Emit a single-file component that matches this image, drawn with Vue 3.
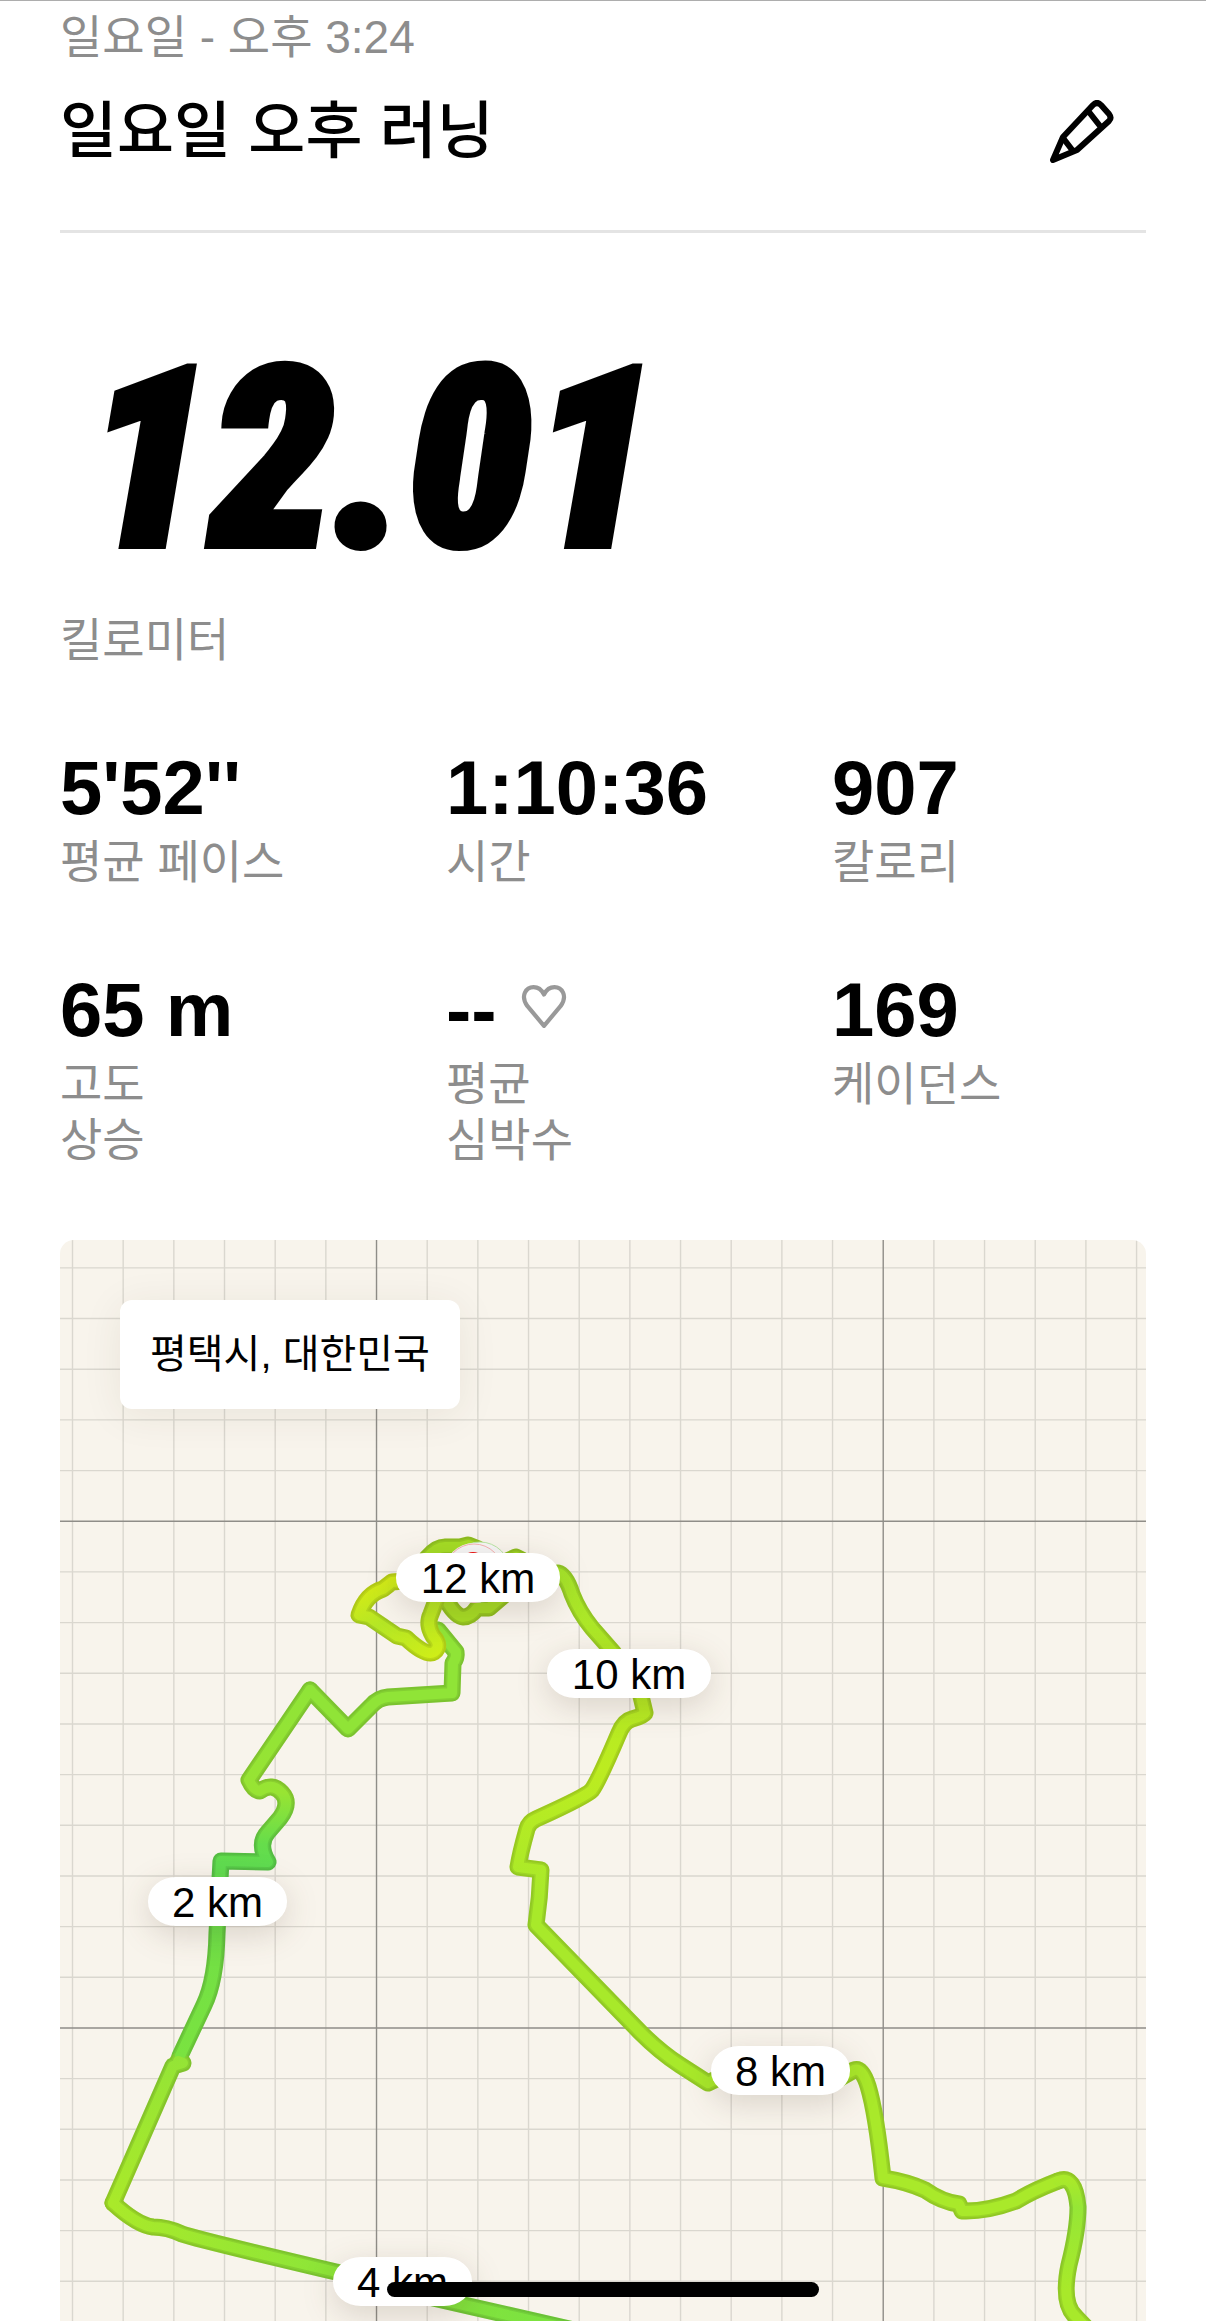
<template>
  <main class="run-page">
    <!-- 헤더 -->
    <header class="run-header">
      <p class="run-date">{{ run.date }}</p>
      <div class="title-row">
        <h1 class="run-title">{{ run.title }}</h1>
        <button type="button" class="edit-button" aria-label="러닝 이름 수정">
          <svg class="edit-icon" viewBox="0 0 64 64">
            <path d="M3 60 L13 37 L43 5 Q47 1 51 5 L59 14 Q62 18 59 21 L27 50 Z" />
            <path d="M39 12 L50 26 M13 38 L23 51" />
          </svg>
        </button>
      </div>
    </header>

    <!-- 거리 -->
    <section class="distance">
      <p class="distance-value">{{ run.distance }}</p>
      <p class="label">킬로미터</p>
    </section>

    <!-- 상세 기록 -->
    <section class="stats">
      <div v-for="stat in stats" :key="stat.label" class="stat">
        <p class="stat-value">
          {{ stat.value }}
          <svg v-if="stat.heart" class="heart-icon" viewBox="0 0 44 44">
            <path d="M22 40 L6 21 C-1 11 5 3 12 3 C17 3 20 6 22 10 C24 6 27 3 32 3 C39 3 45 11 38 21 Z" />
          </svg>
        </p>
        <p class="label">{{ stat.label }}</p>
      </div>
    </section>

    <!-- 지도 -->
    <section class="map">
      <svg class="map-canvas" viewBox="60 1240 1086 1081" preserveAspectRatio="xMidYMin slice">
        <defs>
          <linearGradient id="fade-north" gradientUnits="userSpaceOnUse" x1="0" y1="1690" x2="0" y2="2056">
            <stop offset="0" stop-color="#90e437" />
            <stop offset="0.28" stop-color="#98e433" />
            <stop offset="0.42" stop-color="#66dd4b" />
            <stop offset="0.48" stop-color="#5fdc50" />
            <stop offset="0.75" stop-color="#74e044" />
            <stop offset="1" stop-color="#7ae340" />
          </linearGradient>
          <linearGradient id="fade-west" gradientUnits="userSpaceOnUse" x1="0" y1="2056" x2="0" y2="2203">
            <stop offset="0" stop-color="#94e436" />
            <stop offset="1" stop-color="#a9e92a" />
          </linearGradient>
          <linearGradient id="fade-south" gradientUnits="userSpaceOnUse" x1="113" y1="0" x2="540" y2="0">
            <stop offset="0" stop-color="#a9e92a" />
            <stop offset="0.5" stop-color="#8de538" />
            <stop offset="1" stop-color="#7ce240" />
          </linearGradient>
          <linearGradient id="fade-east" gradientUnits="userSpaceOnUse" x1="0" y1="1570" x2="0" y2="1900">
            <stop offset="0" stop-color="#a6e52a" />
            <stop offset="0.6" stop-color="#bcec20" />
            <stop offset="1" stop-color="#a8e92a" />
          </linearGradient>
          <linearGradient id="fade-loop" gradientUnits="userSpaceOnUse" x1="400" y1="1575" x2="440" y2="1655">
            <stop offset="0" stop-color="#d0ea18" />
            <stop offset="0.4" stop-color="#b4e625" />
            <stop offset="1" stop-color="#cfee18" />
          </linearGradient>
          <linearGradient id="fade-end" gradientUnits="userSpaceOnUse" x1="0" y1="2180" x2="0" y2="2290">
            <stop offset="0" stop-color="#a9e92a" />
            <stop offset="0.25" stop-color="#96e636" />
            <stop offset="1" stop-color="#a8e92a" />
          </linearGradient>
        </defs>

        <g class="grid-minor">
          <line v-for="x in minorX" :key="'x' + x" :x1="x" y1="1240" :x2="x" y2="2321" />
          <line v-for="y in minorY" :key="'y' + y" x1="60" :y1="y" x2="1146" :y2="y" />
        </g>
        <g class="grid-major">
          <line v-for="x in majorX" :key="'x' + x" :x1="x" y1="1240" :x2="x" y2="2321" />
          <line v-for="y in majorY" :key="'y' + y" x1="60" :y1="y" x2="1146" :y2="y" />
        </g>

        <!-- 러닝 경로 -->
        <g v-for="(parts, index) in route" :key="index" class="route">
          <g v-for="layer in layers" :key="layer" :class="layer">
            <path v-for="part in parts" :key="part.d" :d="part.d" :stroke="part.color" />
          </g>
        </g>

        <!-- 출발 / 도착 지점 -->
        <circle cx="480" cy="1572" r="30" fill="#f6f6f6" stroke="#b9e6a4" />
        <circle cx="474" cy="1573" r="30" fill="#f6f6f6" />
        <circle cx="474" cy="1573" r="29" fill="none" stroke="#f5b1b1" />
        <circle cx="473" cy="1565" r="13" fill="#ee1111" />

        <g v-for="marker in markers" :key="marker.text" class="marker">
          <rect :x="marker.x" :y="marker.y" :width="marker.width" height="49" rx="28" ry="24" />
          <text :x="marker.x + marker.width / 2" :y="marker.y + 40">{{ marker.text }}</text>
        </g>
      </svg>
      <p class="location">{{ run.location }}</p>
    </section>

    <div class="home-indicator"></div>
  </main>
</template>

<script setup>
import { ref } from "vue";

const run = ref({
  date: "일요일 - 오후 3:24",
  title: "일요일 오후 러닝",
  distance: "12.01",
  location: "평택시, 대한민국",
});

const stats = ref([
  { value: "5'52''", label: "평균 페이스" },
  { value: "1:10:36", label: "시간" },
  { value: "907", label: "칼로리" },
  { value: "65 m", label: "고도\n상승" },
  { value: "--", label: "평균\n심박수", heart: true },
  { value: "169", label: "케이던스" },
]);

// 10칸마다 굵은 선
const GRID = 50.67;
const gridLines = (start, count, major) => {
  const lines = Array.from({ length: count }, (_, i) => ({
    at: start + i * GRID,
    isMajor: i % 10 === major,
  }));
  return [
    lines.filter((line) => !line.isMajor).map((line) => line.at),
    lines.filter((line) => line.isMajor).map((line) => line.at),
  ];
};

const [minorX, majorX] = gridLines(72.5, 22, 6);
const [minorY, majorY] = gridLines(1267.9, 21, 5);

// 선 하나를 여러 겹으로 그려서 테두리를 표현
const layers = ["route-base", "route-edge", "route-soft", "route-core"];

const route = [
  [
    {
      color: "#a4dc25",
      d: "M427 1558 Q436 1547 445 1547 L460 1547 L468 1545 L478 1549 M505 1562 L516 1557 L522 1560",
    },
    {
      color: "#a6dc25",
      d: "M446 1600 Q456 1617 463 1617 Q471 1617 477 1608 L489 1608 L510 1590",
    },
  ],
  [
    {
      color: "#90e437",
      d: "M438 1630 L456 1652 Q457 1658 453 1663 L452 1693 L388 1697 Q378 1698 371 1706 L348 1729 L310 1690",
    },
    {
      color: "url(#fade-north)",
      d: "M310 1690 L249 1780 Q254 1791 260 1791 Q272 1782 282 1793 Q291 1803 280 1818 L268 1832 Q257 1844 268 1862 L221 1861 L217 1933 Q216 1980 204 2005 L180 2056",
    },
    {
      color: "url(#fade-west)",
      d: "M178 2061 L183 2063 L173 2066 L113 2203",
    },
    {
      color: "url(#fade-south)",
      d: "M113 2203 Q137 2225 153 2227 Q167 2227 182 2234 Q196 2239 336 2272 L420 2295 L600 2336",
    },
  ],
  [
    {
      color: "url(#fade-loop)",
      d: "M404 1581 L392 1582 L383 1589 Q366 1594 359 1615 L369 1617 L397 1636 L406 1638 Q426 1657 434 1652 Q442 1646 433 1636 Q426 1624 431 1614 L437 1598",
    },
  ],
  [
    {
      color: "url(#fade-east)",
      d: "M558 1573 Q566 1575 572 1594 Q579 1612 592 1628 L613 1652 L640 1692 L645 1713 Q643 1716 632 1719 Q624 1721 619 1733 Q599 1780 592 1790 Q587 1796 536 1819 Q529 1822 527 1829 Q520 1854 518 1867 L541 1870 Q540 1898 536 1925 L640 2032 Q660 2052 680 2065 L708 2083 L735 2070",
    },
    {
      color: "#a9e92a",
      d: "M840 2078 L854 2070 Q862 2067 868 2086 Q876 2112 883 2178 Q908 2182 925 2190 Q942 2202 959 2204 L962 2211 Q986 2212 1016 2201 Q1032 2191 1058 2181",
    },
    {
      color: "url(#fade-end)",
      d: "M1058 2181 Q1075 2174 1078 2207 Q1078 2230 1069 2265 Q1061 2304 1076 2317 L1094 2336",
    },
  ],
];

const markers = [
  { text: "12 km", x: 396, y: 1553, width: 164 },
  { text: "10 km", x: 547, y: 1649, width: 164 },
  { text: "2 km", x: 148, y: 1877, width: 139 },
  { text: "8 km", x: 711, y: 2046, width: 139 },
  { text: "4 km", x: 333, y: 2257, width: 139 },
];
</script>

<style>
body {
  margin: 0;
  background: #fff;
}
</style>

<style scoped>
.run-page {
  min-height: 100vh;
  box-sizing: border-box;
  display: flex;
  flex-direction: column;
  padding: 8px 60px 0;
  border-top: 1px solid #adadad;
  font-family: "Liberation Sans", "Noto Sans CJK KR", sans-serif;
  color: #000;
}

p,
h1 {
  margin: 0;
}

/* 헤더 */
.run-header {
  padding-bottom: 48px;
  border-bottom: 3px solid #e4e4e4;
}

.run-date,
.label {
  font-size: 46px;
  line-height: 56px;
  color: #8d8d8d;
  white-space: pre-line;
}

.title-row {
  display: flex;
  align-items: center;
  justify-content: space-between;
  height: 100px;
  margin-top: 17px;
}

.run-title {
  font-size: 62px;
  line-height: 80px;
  font-weight: 500;
}

.edit-button {
  padding: 0 32px;
  border: none;
  background: none;
  cursor: pointer;
}

.edit-icon {
  display: block;
  width: 64px;
  height: 64px;
  fill: none;
  stroke: #000;
  stroke-width: 6;
  stroke-linejoin: round;
}

/* 거리 */
.distance-value {
  margin: 127px 0 52px;
  padding-left: 26px;
  font-family: "Roboto Condensed", Roboto, sans-serif;
  font-size: 250px;
  line-height: 200px;
  font-weight: 900;
  font-style: italic;
  -webkit-text-stroke: 8px #000;
}

/* 상세 기록 */
.stats {
  display: grid;
  grid-template-columns: repeat(3, 1fr);
  gap: 80px 72px;
  margin: 80px 0 72px;
}

.stat-value {
  display: flex;
  align-items: center;
  gap: 24px;
  margin-bottom: 6px;
  font-size: 76px;
  line-height: 80px;
  font-weight: 700;
  white-space: nowrap;
}

.heart-icon {
  width: 46px;
  height: 46px;
  margin-bottom: 6px;
  fill: none;
  stroke: #999;
  stroke-width: 4;
  stroke-linejoin: round;
}

/* 지도 */
.map {
  position: relative;
  flex: 1;
  min-height: 600px;
  display: flex;
  align-items: flex-start;
  border-radius: 14px 14px 0 0;
  overflow: hidden;
  background: #f8f4ec;
}

.map-canvas {
  position: absolute;
  inset: 0;
  width: 100%;
  height: 100%;
}

.grid-minor {
  stroke: #dad7cf;
  stroke-width: 1.4;
}

.grid-major {
  stroke: #8f8d88;
  stroke-width: 1.4;
}

.route path {
  fill: none;
  stroke-linecap: round;
  stroke-linejoin: round;
}

.route-base path {
  stroke-width: 17;
}

.route-edge {
  opacity: 0.14;
}

.route-edge path {
  stroke: #000;
  stroke-width: 17;
}

.route-soft {
  opacity: 0.4;
}

.route-soft path {
  stroke-width: 13;
}

.route-core path {
  stroke-width: 10;
}

.marker rect {
  fill: #fff;
  filter: drop-shadow(0 8px 16px rgba(60, 40, 20, 0.16));
}

.marker text {
  font-size: 42px;
  text-anchor: middle;
}

.location {
  position: relative;
  margin: 60px;
  padding: 26px 30px;
  border-radius: 12px;
  background: #fff;
  box-shadow: 0 6px 40px rgba(60, 50, 20, 0.08);
  font-size: 40px;
  line-height: 57px;
}

.home-indicator {
  position: fixed;
  left: 50%;
  bottom: 24px;
  width: 432px;
  height: 15px;
  border-radius: 8px;
  background: #000;
  transform: translateX(-50%);
}
</style>
